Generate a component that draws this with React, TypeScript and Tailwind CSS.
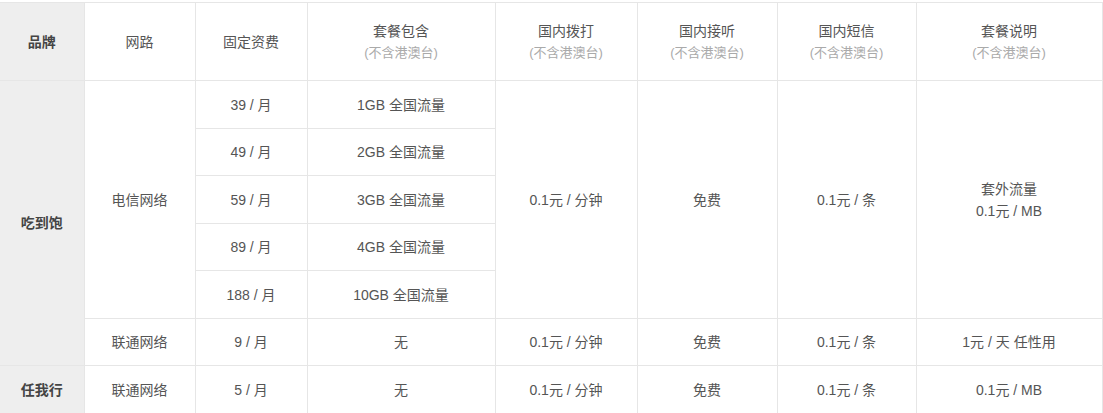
import React from "react";

const cell = "border border-[#e6e6e6] text-center align-middle p-0";
const sub = "block text-[13px] text-[#aaaaaa] leading-[22px]";

const plans = [
  { fee: "39 / 月", data: "1GB 全国流量", h: "h-[48px]" },
  { fee: "49 / 月", data: "2GB 全国流量", h: "h-[47px]" },
  { fee: "59 / 月", data: "3GB 全国流量", h: "h-[48px]" },
  { fee: "89 / 月", data: "4GB 全国流量", h: "h-[47px]" },
  { fee: "188 / 月", data: "10GB 全国流量", h: "h-[48px]" },
];

const headers = ["套餐包含", "国内拨打", "国内接听", "国内短信", "套餐说明"];

export default function App() {
  return (
    <div
      className="w-[1103px] h-[413px] overflow-hidden bg-white pt-[2px]"
      style={{ fontFamily: '"Liberation Sans", "Noto Sans CJK SC", sans-serif' }}
    >
      <table className="w-[1102px] table-fixed border-collapse text-[14px] leading-[22px] text-[#555555]">
        <colgroup>
          <col className="w-[84px]" />
          <col className="w-[111px]" />
          <col className="w-[112px]" />
          <col className="w-[188px]" />
          <col className="w-[142px]" />
          <col className="w-[140px]" />
          <col className="w-[139px]" />
          <col className="w-[186px]" />
        </colgroup>
        <tbody>
          <tr className="h-[78px]">
            <td className={`${cell} border-l-0 bg-[#eeeeee] font-bold text-[#444444]`}>品牌</td>
            <td className={cell}>网路</td>
            <td className={cell}>固定资费</td>
            {headers.map((h) => (
              <td key={h} className={cell}>
                <span className="block">{h}</span>
                <span className={sub}>(不含港澳台)</span>
              </td>
            ))}
          </tr>
          {plans.map((p, i) => (
            <tr key={p.fee} className={p.h}>
              {i === 0 && (
                <>
                  <td rowSpan={6} className={`${cell} border-l-0 bg-[#eeeeee] font-bold text-[#444444]`}>
                    吃到饱
                  </td>
                  <td rowSpan={5} className={cell}>电信网络</td>
                </>
              )}
              <td className={cell}>{p.fee}</td>
              <td className={cell}>{p.data}</td>
              {i === 0 && (
                <>
                  <td rowSpan={5} className={cell}>0.1元 / 分钟</td>
                  <td rowSpan={5} className={cell}>免费</td>
                  <td rowSpan={5} className={cell}>0.1元 / 条</td>
                  <td rowSpan={5} className={cell}>
                    <span className="block">套外流量</span>
                    <span className="block">0.1元 / MB</span>
                  </td>
                </>
              )}
            </tr>
          ))}
          <tr className="h-[47px]">
            <td className={cell}>联通网络</td>
            <td className={cell}>9 / 月</td>
            <td className={cell}>无</td>
            <td className={cell}>0.1元 / 分钟</td>
            <td className={cell}>免费</td>
            <td className={cell}>0.1元 / 条</td>
            <td className={cell}>1元 / 天 任性用</td>
          </tr>
          <tr className="h-[48px]">
            <td className={`${cell} border-l-0 bg-[#eeeeee] font-bold text-[#444444]`}>任我行</td>
            <td className={cell}>联通网络</td>
            <td className={cell}>5 / 月</td>
            <td className={cell}>无</td>
            <td className={cell}>0.1元 / 分钟</td>
            <td className={cell}>免费</td>
            <td className={cell}>0.1元 / 条</td>
            <td className={cell}>0.1元 / MB</td>
          </tr>
        </tbody>
      </table>
    </div>
  );
}
